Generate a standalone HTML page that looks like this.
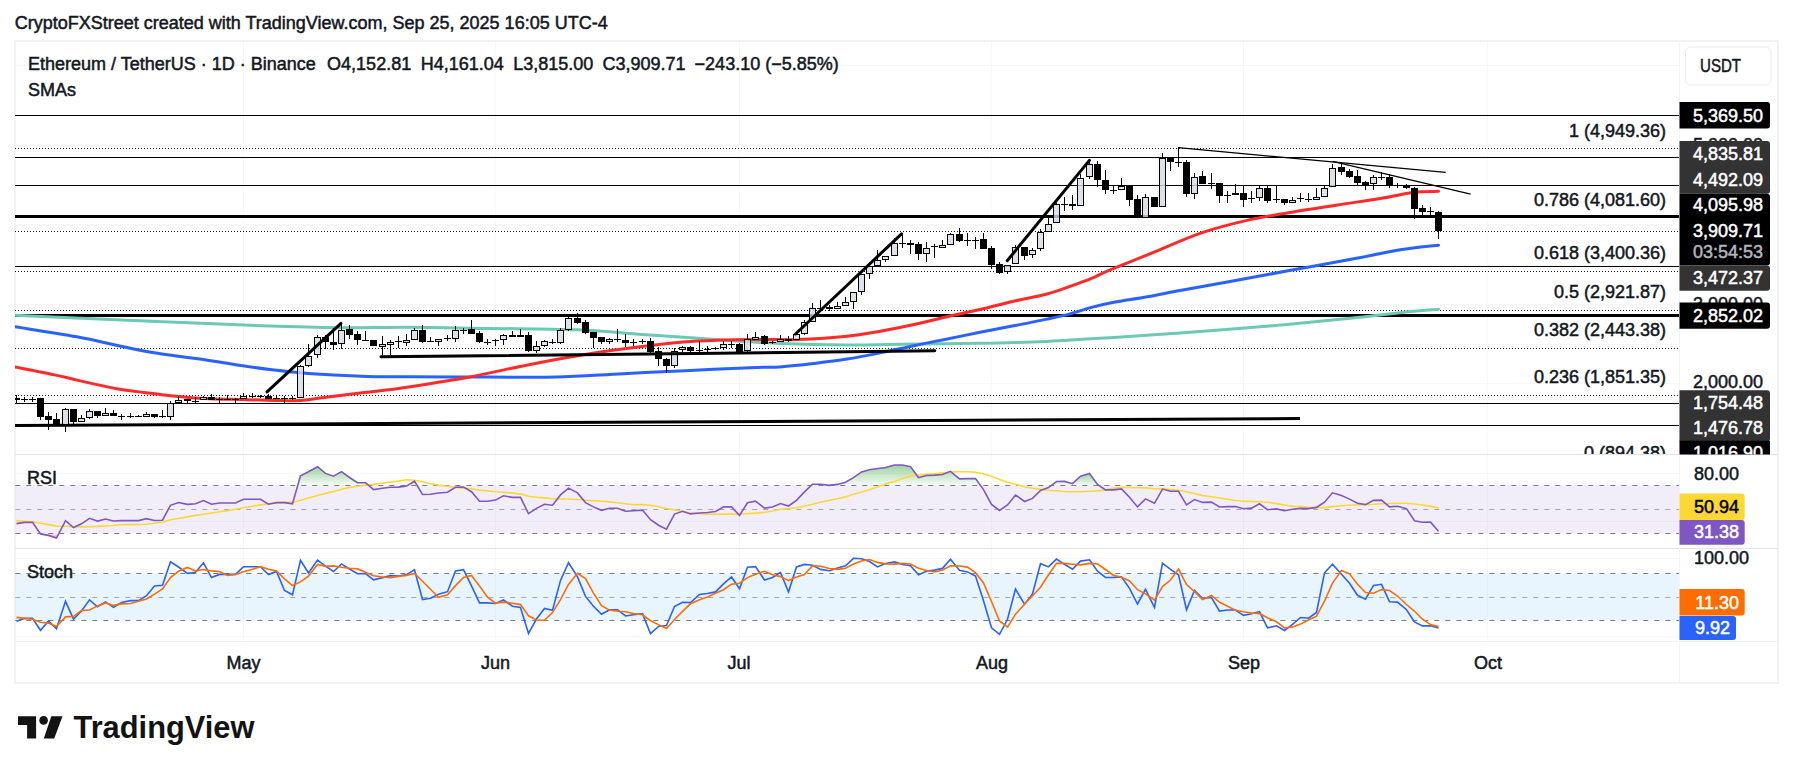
<!DOCTYPE html><html><head><meta charset="utf-8"><style>html,body{margin:0;padding:0;background:#fff;width:1793px;height:773px;overflow:hidden}svg{display:block}text{paint-order:stroke}</style></head><body>
<svg width="1793" height="773" viewBox="0 0 1793 773" font-family="'Liberation Sans', sans-serif" font-size="18">
<defs>
<clipPath id="cm"><rect x="15" y="42" width="1664" height="412"/></clipPath>
<clipPath id="cr"><rect x="15" y="455" width="1664" height="93"/></clipPath>
<clipPath id="cs"><rect x="15" y="549" width="1664" height="92"/></clipPath>
<linearGradient id="gg" x1="0" y1="0" x2="0" y2="1"><stop offset="0" stop-color="#4caf50" stop-opacity="0.55"/><stop offset="1" stop-color="#4caf50" stop-opacity="0.05"/></linearGradient>
<linearGradient id="gr" x1="0" y1="0" x2="0" y2="1"><stop offset="0" stop-color="#f23645" stop-opacity="0.05"/><stop offset="1" stop-color="#f23645" stop-opacity="0.55"/></linearGradient>
</defs>
<text x="14.7" y="29" fill="#131722" stroke="#131722" stroke-width="0.5">CryptoFXStreet created with TradingView.com, Sep 25, 2025 16:05 UTC-4</text>
<rect x="15" y="41" width="1763" height="642" fill="#fff" stroke="#f2f2f2" stroke-width="2"/>
<line x1="16" x2="1679" y1="65.5" y2="65.5" stroke="#f7f7f8"/>
<line x1="16" x2="1679" y1="145.5" y2="145.5" stroke="#f7f7f8"/>
<line x1="16" x2="1679" y1="224.5" y2="224.5" stroke="#f7f7f8"/>
<line x1="16" x2="1679" y1="304.5" y2="304.5" stroke="#f7f7f8"/>
<line x1="16" x2="1679" y1="383.5" y2="383.5" stroke="#f7f7f8"/>
<line x1="243.5" x2="243.5" y1="42" y2="641" stroke="#f7f7f8"/>
<line x1="495.5" x2="495.5" y1="42" y2="641" stroke="#f7f7f8"/>
<line x1="739.5" x2="739.5" y1="42" y2="641" stroke="#f7f7f8"/>
<line x1="991.5" x2="991.5" y1="42" y2="641" stroke="#f7f7f8"/>
<line x1="1243.5" x2="1243.5" y1="42" y2="641" stroke="#f7f7f8"/>
<line x1="1487.5" x2="1487.5" y1="42" y2="641" stroke="#f7f7f8"/>
<line x1="16" x2="1679" y1="473.5" y2="473.5" stroke="#f7f7f8"/>
<line x1="16" x2="1679" y1="521.5" y2="521.5" stroke="#f7f7f8"/>
<line x1="16" x2="1679" y1="558.5" y2="558.5" stroke="#f7f7f8"/>
<line x1="16" x2="1679" y1="636.5" y2="636.5" stroke="#f7f7f8"/>
<line x1="15" x2="1778" y1="454.5" y2="454.5" stroke="#e0e3eb"/>
<line x1="15" x2="1778" y1="548.5" y2="548.5" stroke="#e0e3eb"/>
<line x1="15" x2="1778" y1="641.5" y2="641.5" stroke="#f0f0f0"/>
<line x1="1679.5" x2="1679.5" y1="41" y2="682" stroke="#f4f4f4"/>
<g clip-path="url(#cm)">
<line x1="15" x2="1679" y1="148.5" y2="148.5" stroke="#131722" stroke-width="1" stroke-dasharray="1 2"/>
<line x1="15" x2="1679" y1="271.5" y2="271.5" stroke="#131722" stroke-width="1" stroke-dasharray="1 2"/>
<line x1="15" x2="1679" y1="310.5" y2="310.5" stroke="#131722" stroke-width="1" stroke-dasharray="1 2"/>
<line x1="15" x2="1679" y1="348.5" y2="348.5" stroke="#131722" stroke-width="1" stroke-dasharray="1 2"/>
<line x1="15" x2="1679" y1="395.5" y2="395.5" stroke="#131722" stroke-width="1" stroke-dasharray="1 2"/>
<line x1="15" x2="1679" y1="231.5" y2="231.5" stroke="#131722" stroke-width="1" stroke-dasharray="1 2"/>
<line x1="15" x2="1679" y1="115.5" y2="115.5" stroke="#000" stroke-width="1"/>
<line x1="15" x2="1679" y1="157.5" y2="157.5" stroke="#000" stroke-width="1"/>
<line x1="15" x2="1679" y1="185.5" y2="185.5" stroke="#000" stroke-width="1"/>
<line x1="15" x2="1679" y1="266.5" y2="266.5" stroke="#000" stroke-width="1"/>
<line x1="15" x2="1679" y1="403.5" y2="403.5" stroke="#000" stroke-width="1"/>
<line x1="15" x2="1679" y1="425.5" y2="425.5" stroke="#000" stroke-width="1"/>
<line x1="15" x2="1679" y1="216.5" y2="216.5" stroke="#000" stroke-width="3"/>
<line x1="15" x2="1679" y1="315.5" y2="315.5" stroke="#000" stroke-width="3"/>
<line x1="15" y1="425.5" x2="1300" y2="418.5" stroke="#000" stroke-width="3"/>
<path d="M15.0,315.2 C29.0,315.8 70.3,317.7 99.2,319.0 C128.1,320.3 158.8,321.6 188.5,322.8 C218.2,324.0 251.7,325.5 277.7,326.3 C303.7,327.1 322.6,327.6 344.6,327.7 C366.7,327.8 385.9,327.1 410.0,327.2 C434.1,327.3 461.1,328.0 489.2,328.4 C517.3,328.8 552.5,328.8 578.5,329.8 C604.5,330.9 623.1,333.1 645.4,334.7 C667.7,336.3 689.9,337.7 712.3,339.2 C734.7,340.7 757.6,342.5 780.0,343.5 C802.4,344.5 824.6,345.0 846.9,345.1 C869.2,345.2 891.7,344.3 913.9,344.0 C936.1,343.7 957.8,343.7 980.0,343.3 C1002.2,342.9 1024.6,342.4 1046.9,341.4 C1069.2,340.4 1091.7,338.9 1113.9,337.5 C1136.1,336.1 1161.3,334.4 1180.0,333.0 C1198.7,331.6 1207.3,330.9 1226.0,329.4 C1244.7,327.9 1270.0,326.0 1292.0,324.0 C1314.0,322.0 1339.6,319.3 1357.9,317.4 C1376.2,315.5 1388.5,313.9 1401.9,312.5 C1415.3,311.1 1432.4,309.8 1438.5,309.2" fill="none" stroke="#6cc9b3" stroke-width="3" stroke-linecap="round"/>
<path d="M15.0,326.8 C25.3,328.5 55.4,332.8 76.9,336.8 C98.4,340.8 121.6,346.9 143.9,350.9 C166.2,354.9 194.0,358.2 210.8,360.7 C227.6,363.2 231.5,364.3 244.6,366.1 C257.7,367.9 274.3,370.2 289.2,371.7 C304.1,373.2 320.9,374.3 333.9,375.1 C346.9,375.9 354.6,376.2 367.3,376.5 C380.0,376.8 389.7,376.6 410.0,376.7 C430.3,376.8 464.8,377.0 489.2,377.1 C513.6,377.2 533.9,377.7 556.2,377.1 C578.5,376.5 600.8,374.8 623.1,373.7 C645.4,372.6 667.7,371.4 690.0,370.4 C712.3,369.4 741.9,368.1 756.9,367.5 C771.9,366.9 770.6,367.6 780.0,366.9 C789.4,366.2 802.4,364.8 813.5,363.5 C824.6,362.2 835.8,360.9 846.9,359.1 C858.0,357.3 869.2,355.1 880.4,352.9 C891.6,350.7 902.8,348.0 913.9,345.7 C925.0,343.4 936.3,341.2 947.3,339.0 C958.3,336.8 969.0,334.4 980.0,332.2 C991.0,330.0 1002.4,328.0 1013.5,325.8 C1024.7,323.6 1037.6,321.1 1046.9,319.1 C1056.2,317.2 1061.8,316.1 1069.2,314.1 C1076.6,312.2 1084.0,309.4 1091.5,307.4 C1099.0,305.4 1104.6,304.1 1113.9,302.3 C1123.2,300.5 1136.3,298.8 1147.3,296.8 C1158.3,294.9 1166.9,293.0 1180.0,290.6 C1193.1,288.2 1207.3,285.6 1226.0,282.2 C1244.7,278.8 1270.0,274.1 1292.0,270.1 C1314.0,266.1 1339.6,261.4 1357.9,258.0 C1376.2,254.6 1388.5,251.7 1401.9,249.6 C1415.3,247.5 1432.4,245.9 1438.5,245.2" fill="none" stroke="#2962ff" stroke-width="3" stroke-linecap="round"/>
<path d="M15.0,367.0 C21.6,368.3 44.3,372.7 54.6,374.9 C64.9,377.1 69.5,378.4 76.9,380.1 C84.3,381.8 91.8,383.5 99.2,385.1 C106.6,386.7 114.0,388.4 121.5,389.6 C128.9,390.8 136.5,391.5 143.9,392.4 C151.3,393.3 158.8,394.4 166.2,395.2 C173.6,396.0 181.2,396.8 188.5,397.4 C195.8,398.0 200.7,398.3 210.0,398.7 C219.3,399.1 233.6,399.3 244.6,399.6 C255.6,399.9 266.7,400.2 276.0,400.4 C285.3,400.6 292.7,401.0 300.4,400.6 C308.1,400.2 312.7,399.0 322.0,397.8 C331.3,396.6 343.2,395.1 356.2,393.5 C369.2,391.9 381.6,390.9 400.0,388.2 C418.4,385.5 444.6,381.6 466.9,377.5 C489.2,373.4 511.6,367.9 533.9,363.7 C556.2,359.5 578.5,355.5 600.8,352.1 C623.1,348.8 651.0,345.5 667.7,343.6 C684.4,341.7 690.1,341.5 701.2,340.9 C712.4,340.3 721.5,340.0 734.6,339.8 C747.7,339.6 769.6,339.5 780.0,339.5 C790.4,339.5 785.6,340.2 796.7,339.6 C807.9,339.1 833.0,337.6 846.9,336.2 C860.8,334.8 869.2,333.1 880.4,331.2 C891.6,329.2 902.8,326.9 913.9,324.5 C925.0,322.1 936.3,319.2 947.3,316.7 C958.3,314.2 969.0,312.1 980.0,309.5 C991.0,306.9 1002.4,303.8 1013.5,301.2 C1024.7,298.6 1037.6,296.4 1046.9,294.0 C1056.2,291.6 1061.8,289.3 1069.2,286.7 C1076.6,284.1 1085.0,281.1 1091.5,278.4 C1098.0,275.7 1098.4,274.8 1108.3,270.6 C1118.2,266.4 1135.7,259.6 1151.0,253.4 C1166.3,247.2 1183.8,238.9 1200.0,233.3 C1216.2,227.8 1232.7,223.6 1248.0,220.1 C1263.3,216.6 1277.3,214.7 1292.0,212.2 C1306.7,209.7 1321.3,207.5 1336.0,205.2 C1350.7,202.9 1367.2,200.7 1380.0,198.6 C1392.8,196.5 1403.2,193.6 1412.9,192.4 C1422.7,191.2 1434.2,191.5 1438.5,191.3" fill="none" stroke="#ff2a2a" stroke-width="3" stroke-linecap="round"/>
<path d="M16.5,395V403M24.5,397V402M32.5,397V402M40.5,398V420M48.5,412V430M56.5,413V426M65.5,408V409M65.5,425V432M73.5,409V424M81.5,415V418M89.5,409V411M89.5,418V419M97.5,411V418M105.5,408V413M113.5,410V416M121.5,414V420M130.5,413V418M138.5,415V417M146.5,412V414M154.5,414V418M162.5,410V418M170.5,401V403M170.5,417V420M178.5,396V400M187.5,399V404M195.5,397V404M203.5,396V397M211.5,394V400M219.5,397V403M227.5,395V399M235.5,398V404M243.5,393V396M252.5,393V398M260.5,395V398M268.5,394V399M276.5,396V399M284.5,396V403M292.5,396V400M300.5,365V366M308.5,344V356M308.5,366V367M317.5,335V337M317.5,355V358M325.5,335V349M333.5,332V350M341.5,324V330M341.5,344V349M349.5,325V339M357.5,331V345M365.5,331V341M373.5,340V346M382.5,336V344M382.5,347V358M390.5,340V342M390.5,345V355M398.5,336V348M406.5,334V340M406.5,343V346M414.5,328V330M422.5,325V343M430.5,337V341M438.5,342V346M447.5,335V341M455.5,326V330M455.5,339V342M463.5,328V334M471.5,320V334M479.5,331V343M487.5,339V345M495.5,339V346M503.5,334V335M503.5,340V345M512.5,331V336M520.5,329V336M528.5,332V352M536.5,341V346M536.5,351V353M544.5,340V341M544.5,346V347M552.5,339V344M560.5,328V330M560.5,343V344M568.5,316V318M568.5,330V331M577.5,313V324M585.5,320V334M593.5,332V348M601.5,337V344M609.5,338V339M609.5,342V344M617.5,329V342M625.5,334V347M633.5,339V346M642.5,339V344M650.5,338V353M658.5,347V366M666.5,358V373M674.5,348V351M674.5,366V368M682.5,346V347M682.5,350V352M690.5,346V352M699.5,341V352M707.5,346V352M715.5,347V350M723.5,341V344M723.5,348V350M731.5,341V348M739.5,343V352M747.5,334V339M747.5,351V352M755.5,332V337M764.5,335V345M772.5,341V344M780.5,335V339M788.5,336V342M796.5,333V334M804.5,320V322M804.5,334V335M812.5,303V308M820.5,300V311M829.5,305V311M837.5,302V306M845.5,297V302M853.5,302V309M861.5,292V295M869.5,262V266M869.5,274V279M877.5,250V260M885.5,260V262M894.5,238V243M902.5,235V248M910.5,240V254M918.5,242V260M926.5,242V248M926.5,254V262M934.5,244V258M942.5,240V245M950.5,233V234M959.5,228V242M967.5,233V246M975.5,237V249M983.5,233V249M991.5,246V269M999.5,262V274M1007.5,272V274M1015.5,245V247M1024.5,247V260M1032.5,248V250M1032.5,255V258M1040.5,229V232M1040.5,249V251M1048.5,217V224M1056.5,203V204M1064.5,197V211M1072.5,195V210M1080.5,174V178M1089.5,162V164M1089.5,177V179M1097.5,161V187M1105.5,170V194M1113.5,186V194M1121.5,178V186M1129.5,185V206M1137.5,195V218M1145.5,194V197M1154.5,197V207M1162.5,153V158M1170.5,158V171M1178.5,147V167M1186.5,160V197M1194.5,173V177M1194.5,194V199M1202.5,171V184M1211.5,173V189M1219.5,183V203M1227.5,191V203M1235.5,184V195M1243.5,186V207M1251.5,191V203M1259.5,186V188M1259.5,198V201M1267.5,186V203M1276.5,186V203M1284.5,199V205M1292.5,197V200M1300.5,193V202M1308.5,193V202M1316.5,188V197M1324.5,186V188M1332.5,164V168M1341.5,162V175M1349.5,169V178M1357.5,170V186M1365.5,181V190M1373.5,175V177M1373.5,184V190M1381.5,172V180M1389.5,174V188M1397.5,183V188M1406.5,184V189M1414.5,187V219M1422.5,205V215M1430.5,207V215M1438.5,211V239" stroke="#000" stroke-width="1" fill="none"/>
<path d="M21.0,399.5H28.0M29.0,399.5H36.0M118.0,416.5H125.0M127.0,416.5H134.0M135.0,416.5H142.0M159.0,416.5H166.0M192.0,401.5H199.0M216.0,399.5H223.0M224.0,399.5H231.0M232.0,399.5H239.0M249.0,396.5H256.0M257.0,396.5H264.0M273.0,398.5H280.0M281.0,398.5H288.0M289.0,398.5H296.0M362.0,340.5H369.0M395.0,341.5H402.0M427.0,341.5H434.0M444.0,338.5H451.0M460.0,330.5H467.0M484.0,342.5H491.0M492.0,340.5H499.0M549.0,342.5H556.0M614.0,339.5H621.0M630.0,342.5H637.0M639.0,341.5H646.0M696.0,350.5H703.0M704.0,349.5H711.0M712.0,348.5H719.0M728.0,344.5H735.0M769.0,342.5H776.0M817.0,308.5H824.0M899.0,243.5H906.0M931.0,246.5H938.0M964.0,240.5H971.0M972.0,240.5H979.0M1061.0,204.5H1068.0M1110.0,190.5H1117.0M1175.0,162.5H1182.0M1208.0,183.5H1215.0M1224.0,195.5H1231.0M1248.0,198.5H1255.0M1273.0,199.5H1280.0M1297.0,198.5H1304.0M1305.0,199.5H1312.0M1378.0,177.5H1385.0M1394.0,185.5H1401.0M1427.0,211.5H1434.0" stroke="#000" stroke-width="1" fill="none"/>
<path d="M13.0,398h7v2h-7zM37.0,398h7v19h-7zM45.0,416h7v4h-7zM53.0,419h7v6h-7zM70.0,409h7v13h-7zM94.0,411h7v5h-7zM110.0,413h7v3h-7zM151.0,414h7v3h-7zM184.0,399h7v2h-7zM208.0,397h7v3h-7zM265.0,396h7v3h-7zM322.0,337h7v5h-7zM330.0,342h7v3h-7zM346.0,329h7v6h-7zM354.0,334h7v6h-7zM370.0,340h7v6h-7zM419.0,330h7v12h-7zM468.0,329h7v5h-7zM476.0,333h7v9h-7zM509.0,335h7v2h-7zM517.0,335h7v2h-7zM525.0,335h7v16h-7zM574.0,318h7v5h-7zM582.0,322h7v11h-7zM590.0,332h7v6h-7zM598.0,337h7v5h-7zM622.0,340h7v3h-7zM647.0,341h7v11h-7zM655.0,351h7v8h-7zM663.0,359h7v7h-7zM687.0,347h7v4h-7zM736.0,344h7v8h-7zM761.0,336h7v8h-7zM785.0,339h7v2h-7zM826.0,307h7v2h-7zM907.0,243h7v2h-7zM915.0,244h7v10h-7zM956.0,234h7v7h-7zM980.0,239h7v10h-7zM988.0,248h7v17h-7zM996.0,264h7v9h-7zM1021.0,247h7v9h-7zM1069.0,204h7v2h-7zM1094.0,164h7v16h-7zM1102.0,180h7v10h-7zM1126.0,186h7v14h-7zM1134.0,199h7v19h-7zM1151.0,197h7v10h-7zM1167.0,158h7v4h-7zM1183.0,162h7v32h-7zM1199.0,176h7v8h-7zM1216.0,183h7v13h-7zM1232.0,193h7v2h-7zM1240.0,193h7v7h-7zM1264.0,188h7v13h-7zM1281.0,199h7v4h-7zM1338.0,167h7v5h-7zM1346.0,171h7v6h-7zM1354.0,176h7v7h-7zM1362.0,182h7v3h-7zM1386.0,177h7v9h-7zM1403.0,185h7v3h-7zM1411.0,188h7v21h-7zM1419.0,208h7v4h-7zM1435.0,212h7v19h-7z" fill="#000"/>
<rect x="62.5" y="409.5" width="6" height="15" fill="rgba(214,217,226,0.8)" stroke="#000" stroke-width="1"/>
<rect x="78.5" y="418.5" width="6" height="3" fill="rgba(214,217,226,0.8)" stroke="#000" stroke-width="1"/>
<rect x="86.5" y="411.5" width="6" height="6" fill="rgba(214,217,226,0.8)" stroke="#000" stroke-width="1"/>
<rect x="102.5" y="413.5" width="6" height="2" fill="rgba(214,217,226,0.8)" stroke="#000" stroke-width="1"/>
<rect x="143.5" y="414.5" width="6" height="2" fill="rgba(214,217,226,0.8)" stroke="#000" stroke-width="1"/>
<rect x="167.5" y="403.5" width="6" height="13" fill="rgba(214,217,226,0.8)" stroke="#000" stroke-width="1"/>
<rect x="175.5" y="400.5" width="6" height="2" fill="rgba(214,217,226,0.8)" stroke="#000" stroke-width="1"/>
<rect x="200.5" y="397.5" width="6" height="2" fill="rgba(214,217,226,0.8)" stroke="#000" stroke-width="1"/>
<rect x="240.5" y="396.5" width="6" height="2" fill="rgba(214,217,226,0.8)" stroke="#000" stroke-width="1"/>
<rect x="297.5" y="366.5" width="6" height="31" fill="rgba(214,217,226,0.8)" stroke="#000" stroke-width="1"/>
<rect x="305.5" y="356.5" width="6" height="9" fill="rgba(214,217,226,0.8)" stroke="#000" stroke-width="1"/>
<rect x="314.5" y="337.5" width="6" height="17" fill="rgba(214,217,226,0.8)" stroke="#000" stroke-width="1"/>
<rect x="338.5" y="330.5" width="6" height="13" fill="rgba(214,217,226,0.8)" stroke="#000" stroke-width="1"/>
<rect x="379.5" y="344.5" width="6" height="2" fill="rgba(214,217,226,0.8)" stroke="#000" stroke-width="1"/>
<rect x="387.5" y="342.5" width="6" height="2" fill="rgba(214,217,226,0.8)" stroke="#000" stroke-width="1"/>
<rect x="403.5" y="340.5" width="6" height="2" fill="rgba(214,217,226,0.8)" stroke="#000" stroke-width="1"/>
<rect x="411.5" y="330.5" width="6" height="9" fill="rgba(214,217,226,0.8)" stroke="#000" stroke-width="1"/>
<rect x="435.5" y="339.5" width="6" height="2" fill="rgba(214,217,226,0.8)" stroke="#000" stroke-width="1"/>
<rect x="452.5" y="330.5" width="6" height="8" fill="rgba(214,217,226,0.8)" stroke="#000" stroke-width="1"/>
<rect x="500.5" y="335.5" width="6" height="4" fill="rgba(214,217,226,0.8)" stroke="#000" stroke-width="1"/>
<rect x="533.5" y="346.5" width="6" height="4" fill="rgba(214,217,226,0.8)" stroke="#000" stroke-width="1"/>
<rect x="541.5" y="341.5" width="6" height="4" fill="rgba(214,217,226,0.8)" stroke="#000" stroke-width="1"/>
<rect x="557.5" y="330.5" width="6" height="12" fill="rgba(214,217,226,0.8)" stroke="#000" stroke-width="1"/>
<rect x="565.5" y="318.5" width="6" height="11" fill="rgba(214,217,226,0.8)" stroke="#000" stroke-width="1"/>
<rect x="606.5" y="339.5" width="6" height="2" fill="rgba(214,217,226,0.8)" stroke="#000" stroke-width="1"/>
<rect x="671.5" y="351.5" width="6" height="14" fill="rgba(214,217,226,0.8)" stroke="#000" stroke-width="1"/>
<rect x="679.5" y="347.5" width="6" height="2" fill="rgba(214,217,226,0.8)" stroke="#000" stroke-width="1"/>
<rect x="720.5" y="344.5" width="6" height="3" fill="rgba(214,217,226,0.8)" stroke="#000" stroke-width="1"/>
<rect x="744.5" y="339.5" width="6" height="11" fill="rgba(214,217,226,0.8)" stroke="#000" stroke-width="1"/>
<rect x="752.5" y="337.5" width="6" height="2" fill="rgba(214,217,226,0.8)" stroke="#000" stroke-width="1"/>
<rect x="777.5" y="339.5" width="6" height="2" fill="rgba(214,217,226,0.8)" stroke="#000" stroke-width="1"/>
<rect x="793.5" y="334.5" width="6" height="5" fill="rgba(214,217,226,0.8)" stroke="#000" stroke-width="1"/>
<rect x="801.5" y="322.5" width="6" height="11" fill="rgba(214,217,226,0.8)" stroke="#000" stroke-width="1"/>
<rect x="809.5" y="308.5" width="6" height="13" fill="rgba(214,217,226,0.8)" stroke="#000" stroke-width="1"/>
<rect x="834.5" y="306.5" width="6" height="2" fill="rgba(214,217,226,0.8)" stroke="#000" stroke-width="1"/>
<rect x="842.5" y="302.5" width="6" height="3" fill="rgba(214,217,226,0.8)" stroke="#000" stroke-width="1"/>
<rect x="850.5" y="292.5" width="6" height="9" fill="rgba(214,217,226,0.8)" stroke="#000" stroke-width="1"/>
<rect x="858.5" y="274.5" width="6" height="17" fill="rgba(214,217,226,0.8)" stroke="#000" stroke-width="1"/>
<rect x="866.5" y="266.5" width="6" height="7" fill="rgba(214,217,226,0.8)" stroke="#000" stroke-width="1"/>
<rect x="874.5" y="260.5" width="6" height="5" fill="rgba(214,217,226,0.8)" stroke="#000" stroke-width="1"/>
<rect x="882.5" y="256.5" width="6" height="3" fill="rgba(214,217,226,0.8)" stroke="#000" stroke-width="1"/>
<rect x="891.5" y="243.5" width="6" height="12" fill="rgba(214,217,226,0.8)" stroke="#000" stroke-width="1"/>
<rect x="923.5" y="248.5" width="6" height="5" fill="rgba(214,217,226,0.8)" stroke="#000" stroke-width="1"/>
<rect x="939.5" y="245.5" width="6" height="2" fill="rgba(214,217,226,0.8)" stroke="#000" stroke-width="1"/>
<rect x="947.5" y="234.5" width="6" height="10" fill="rgba(214,217,226,0.8)" stroke="#000" stroke-width="1"/>
<rect x="1004.5" y="265.5" width="6" height="6" fill="rgba(214,217,226,0.8)" stroke="#000" stroke-width="1"/>
<rect x="1012.5" y="247.5" width="6" height="16" fill="rgba(214,217,226,0.8)" stroke="#000" stroke-width="1"/>
<rect x="1029.5" y="250.5" width="6" height="4" fill="rgba(214,217,226,0.8)" stroke="#000" stroke-width="1"/>
<rect x="1037.5" y="232.5" width="6" height="16" fill="rgba(214,217,226,0.8)" stroke="#000" stroke-width="1"/>
<rect x="1045.5" y="224.5" width="6" height="7" fill="rgba(214,217,226,0.8)" stroke="#000" stroke-width="1"/>
<rect x="1053.5" y="204.5" width="6" height="18" fill="rgba(214,217,226,0.8)" stroke="#000" stroke-width="1"/>
<rect x="1077.5" y="178.5" width="6" height="27" fill="rgba(214,217,226,0.8)" stroke="#000" stroke-width="1"/>
<rect x="1086.5" y="164.5" width="6" height="12" fill="rgba(214,217,226,0.8)" stroke="#000" stroke-width="1"/>
<rect x="1118.5" y="186.5" width="6" height="3" fill="rgba(214,217,226,0.8)" stroke="#000" stroke-width="1"/>
<rect x="1142.5" y="197.5" width="6" height="20" fill="rgba(214,217,226,0.8)" stroke="#000" stroke-width="1"/>
<rect x="1159.5" y="158.5" width="6" height="48" fill="rgba(214,217,226,0.8)" stroke="#000" stroke-width="1"/>
<rect x="1191.5" y="177.5" width="6" height="16" fill="rgba(214,217,226,0.8)" stroke="#000" stroke-width="1"/>
<rect x="1256.5" y="188.5" width="6" height="9" fill="rgba(214,217,226,0.8)" stroke="#000" stroke-width="1"/>
<rect x="1289.5" y="200.5" width="6" height="2" fill="rgba(214,217,226,0.8)" stroke="#000" stroke-width="1"/>
<rect x="1313.5" y="197.5" width="6" height="2" fill="rgba(214,217,226,0.8)" stroke="#000" stroke-width="1"/>
<rect x="1321.5" y="188.5" width="6" height="8" fill="rgba(214,217,226,0.8)" stroke="#000" stroke-width="1"/>
<rect x="1329.5" y="168.5" width="6" height="18" fill="rgba(214,217,226,0.8)" stroke="#000" stroke-width="1"/>
<rect x="1370.5" y="177.5" width="6" height="6" fill="rgba(214,217,226,0.8)" stroke="#000" stroke-width="1"/>
<line x1="267" y1="391.9" x2="341" y2="323.4" stroke="#000" stroke-width="3" stroke-linecap="round"/>
<line x1="381" y1="356.8" x2="934.7" y2="350.8" stroke="#000" stroke-width="3" stroke-linecap="round"/>
<line x1="795.5" y1="334" x2="901.6" y2="233.8" stroke="#000" stroke-width="3" stroke-linecap="round"/>
<line x1="1007.2" y1="260.7" x2="1089.4" y2="160.4" stroke="#000" stroke-width="3" stroke-linecap="round"/>
<line x1="1178.3" y1="147.6" x2="1445.7" y2="172.4" stroke="#000" stroke-width="1.2"/>
<line x1="1332.6" y1="161.3" x2="1470.6" y2="194.1" stroke="#000" stroke-width="1.2"/>
<text x="1666" y="136.6" text-anchor="end" fill="#131722" stroke="#131722" stroke-width="0.5">1 (4,949.36)</text>
<text x="1666" y="205.5" text-anchor="end" fill="#131722" stroke="#131722" stroke-width="0.5">0.786 (4,081.60)</text>
<text x="1666" y="259.4" text-anchor="end" fill="#131722" stroke="#131722" stroke-width="0.5">0.618 (3,400.36)</text>
<text x="1666" y="297.9" text-anchor="end" fill="#131722" stroke="#131722" stroke-width="0.5">0.5 (2,921.87)</text>
<text x="1666" y="335.9" text-anchor="end" fill="#131722" stroke="#131722" stroke-width="0.5">0.382 (2,443.38)</text>
<text x="1666" y="383.0" text-anchor="end" fill="#131722" stroke="#131722" stroke-width="0.5">0.236 (1,851.35)</text>
<text x="1666" y="459.1" text-anchor="end" fill="#131722" stroke="#131722" stroke-width="0.5">0 (894.38)</text>
</g>
<text x="28" y="70" fill="#131722" stroke="#131722" stroke-width="0.5">Ethereum / TetherUS · 1D · Binance</text>
<text x="327.1" y="70" fill="#131722" stroke="#131722" stroke-width="0.5">O4,152.81</text>
<text x="420.8" y="70" fill="#131722" stroke="#131722" stroke-width="0.5">H4,161.04</text>
<text x="513.3" y="70" fill="#131722" stroke="#131722" stroke-width="0.5">L3,815.00</text>
<text x="602.5" y="70" fill="#131722" stroke="#131722" stroke-width="0.5">C3,909.71</text>
<text x="694.6" y="70" fill="#131722" stroke="#131722" stroke-width="0.5">−243.10 (−5.85%)</text>
<text x="28" y="95.5" fill="#131722" stroke="#131722" stroke-width="0.5">SMAs</text>
<rect x="1685.5" y="47" width="85.5" height="38" rx="5" fill="#fff" stroke="#ebebeb"/>
<text x="1700" y="71.8" fill="#131722" stroke="#131722" stroke-width="0.5" textLength="41" lengthAdjust="spacingAndGlyphs">USDT</text>
<g>
<text x="1763" y="151.0" text-anchor="end" fill="#131722" stroke="#131722" stroke-width="0.5">5,000.00</text>
<text x="1763" y="310.0" text-anchor="end" fill="#131722" stroke="#131722" stroke-width="0.5">3,000.00</text>
<text x="1763" y="388.1" text-anchor="end" fill="#131722" stroke="#131722" stroke-width="0.5">2,000.00</text>
<path d="M1679.5,102H1767Q1770,102 1770,105V125.4Q1770,128.4 1767,128.4H1679.5Z" fill="#000"/>
<text x="1763" y="121.6" text-anchor="end" fill="#fff" stroke="#fff" stroke-width="0.5">5,369.50</text>
<path d="M1679.5,141.1H1767Q1770,141.1 1770,144.1V190.7Q1770,193.7 1767,193.7H1679.5Z" fill="#333333"/>
<text x="1763" y="159.6" text-anchor="end" fill="#fff" stroke="#fff" stroke-width="0.5">4,835.81</text>
<text x="1763" y="186.0" text-anchor="end" fill="#fff" stroke="#fff" stroke-width="0.5">4,492.09</text>
<path d="M1679.5,193.7H1767Q1770,193.7 1770,196.7V262.6Q1770,265.6 1767,265.6H1679.5Z" fill="#000"/>
<text x="1763" y="211.4" text-anchor="end" fill="#fff" stroke="#fff" stroke-width="0.5">4,095.98</text>
<text x="1763" y="237.0" text-anchor="end" fill="#fff" stroke="#fff" stroke-width="0.5">3,909.71</text>
<text x="1763" y="258.4" text-anchor="end" fill="#b2b5be" stroke="#b2b5be" stroke-width="0.5">03:54:53</text>
<path d="M1679.5,265.6H1767Q1770,265.6 1770,268.6V287.8Q1770,290.8 1767,290.8H1679.5Z" fill="#333333"/>
<text x="1763" y="283.6" text-anchor="end" fill="#fff" stroke="#fff" stroke-width="0.5">3,472.37</text>
<path d="M1679.5,302.5H1767Q1770,302.5 1770,305.5V325.7Q1770,328.7 1767,328.7H1679.5Z" fill="#000"/>
<text x="1763" y="321.5" text-anchor="end" fill="#fff" stroke="#fff" stroke-width="0.5">2,852.02</text>
<path d="M1679.5,390.3H1767Q1770,390.3 1770,393.3V438.5Q1770,441.5 1767,441.5H1679.5Z" fill="#333333"/>
<text x="1763" y="409.1" text-anchor="end" fill="#fff" stroke="#fff" stroke-width="0.5">1,754.48</text>
<text x="1763" y="433.9" text-anchor="end" fill="#fff" stroke="#fff" stroke-width="0.5">1,476.78</text>
<svg x="1679" y="440.5" width="100" height="14" overflow="hidden"><rect x="0.5" y="0" width="90.5" height="20" fill="#000"/><text x="84" y="18.4" text-anchor="end" fill="#fff" stroke="#fff" stroke-width="0.5">1,016.90</text></svg>
</g>
<rect x="15.5" y="485.4" width="1663.5" height="47.8" fill="#7e57c2" fill-opacity="0.1"/>
<rect x="15.5" y="573.7" width="1663.5" height="46.5" fill="#2196f3" fill-opacity="0.1"/>
<line x1="15.3" x2="1679" y1="485.5" y2="485.5" stroke="#787b86" stroke-dasharray="5 6"/>
<line x1="15.3" x2="1679" y1="509.5" y2="509.5" stroke="#a3a6af" stroke-dasharray="5 6"/>
<line x1="15.3" x2="1679" y1="533.5" y2="533.5" stroke="#787b86" stroke-dasharray="5 6"/>
<line x1="15.3" x2="1679" y1="573.5" y2="573.5" stroke="#787b86" stroke-dasharray="5 6"/>
<line x1="15.3" x2="1679" y1="597.5" y2="597.5" stroke="#a3a6af" stroke-dasharray="5 6"/>
<line x1="15.3" x2="1679" y1="620.5" y2="620.5" stroke="#787b86" stroke-dasharray="5 6"/>
<g clip-path="url(#cr)">
<path d="M297.8,485.4 L300.5,475.8 L308.5,471.7 L317.5,466.7 L325.5,473.4 L333.5,476.2 L341.5,471.6 L349.5,477.5 L357.5,482.7 L365.5,482.7 L368.7,485.4Z" fill="url(#gg)"/>
<path d="M407.7,485.4 L414.5,481.2 L417.0,485.4Z" fill="url(#gg)"/>
<path d="M811.3,485.4 L812.5,484.2 L820.5,484.2 L829.4,485.4Z" fill="url(#gg)"/>
<path d="M829.6,485.4 L837.5,484.4 L845.5,482.2 L853.5,477.7 L861.5,471.9 L869.5,469.7 L877.5,468.5 L885.5,467.5 L894.5,465.0 L902.5,465.0 L910.5,466.6 L918.5,477.5 L926.5,475.5 L934.5,475.1 L942.5,474.5 L950.5,471.3 L959.5,478.9 L967.5,478.6 L975.5,478.6 L980.5,485.4Z" fill="url(#gg)"/>
<path d="M1051.3,485.4 L1056.5,481.5 L1064.5,481.4 L1072.5,483.7 L1080.5,476.2 L1089.5,473.5 L1097.5,484.4 L1099.0,485.4Z" fill="url(#gg)"/>
<path d="M40.0,533.2 L40.5,533.9 L48.5,535.4 L56.5,538.0 L59.0,533.2Z" fill="url(#gr)"/>
<polyline points="16.5,520.6 24.5,521.3 32.5,521.9 40.5,523.3 48.5,524.6 56.5,526.1 65.5,526.2 73.5,526.7 81.5,526.9 89.5,526.6 97.5,526.4 105.5,525.9 113.5,525.5 121.5,524.8 130.5,524.6 138.5,524.5 146.5,524.2 154.5,523.2 162.5,522.2 170.5,519.8 178.5,518.5 187.5,516.9 195.5,515.4 203.5,514.2 211.5,513.0 219.5,511.8 227.5,510.6 235.5,509.3 243.5,507.8 252.5,506.3 260.5,504.9 268.5,503.7 276.5,502.5 284.5,502.3 292.5,502.4 300.5,500.3 308.5,498.0 317.5,495.6 325.5,493.4 333.5,491.5 341.5,489.3 349.5,487.4 357.5,486.3 365.5,485.1 373.5,484.4 382.5,483.2 390.5,482.1 398.5,481.0 406.5,479.8 414.5,480.2 422.5,481.8 430.5,483.7 438.5,485.1 447.5,486.3 455.5,487.4 463.5,488.1 471.5,488.7 479.5,490.1 487.5,490.9 495.5,491.7 503.5,492.3 512.5,493.1 520.5,493.9 528.5,496.2 536.5,497.2 544.5,497.9 552.5,498.8 560.5,499.0 568.5,499.0 577.5,499.5 585.5,500.2 593.5,500.6 601.5,501.3 609.5,501.9 617.5,502.8 625.5,503.8 633.5,504.7 642.5,504.5 650.5,505.3 658.5,506.8 666.5,508.5 674.5,509.8 682.5,511.5 690.5,513.0 699.5,513.7 707.5,514.1 715.5,514.2 723.5,514.1 731.5,514.0 739.5,514.3 747.5,513.7 755.5,513.1 764.5,512.3 772.5,511.0 780.5,509.2 788.5,508.6 796.5,507.8 804.5,506.2 812.5,504.2 820.5,502.2 829.5,500.3 837.5,498.7 845.5,496.9 853.5,494.2 861.5,492.0 869.5,489.8 877.5,486.9 885.5,484.1 894.5,481.4 902.5,478.4 910.5,476.0 918.5,475.0 926.5,474.4 934.5,473.7 942.5,472.9 950.5,472.0 959.5,471.8 967.5,471.8 975.5,472.3 983.5,473.7 991.5,476.3 999.5,479.4 1007.5,482.2 1015.5,484.3 1024.5,486.8 1032.5,488.3 1040.5,489.4 1048.5,490.3 1056.5,490.8 1064.5,491.5 1072.5,491.8 1080.5,491.7 1089.5,491.3 1097.5,490.9 1105.5,489.9 1113.5,488.4 1121.5,487.3 1129.5,487.5 1137.5,487.8 1145.5,487.9 1154.5,488.8 1162.5,488.9 1170.5,489.6 1178.5,490.3 1186.5,491.8 1194.5,493.5 1202.5,495.6 1211.5,496.8 1219.5,498.0 1227.5,499.2 1235.5,500.5 1243.5,501.3 1251.5,501.4 1259.5,501.8 1267.5,502.2 1276.5,503.6 1284.5,505.0 1292.5,506.3 1300.5,506.6 1308.5,507.2 1316.5,507.6 1324.5,507.6 1332.5,506.6 1341.5,505.8 1349.5,505.2 1357.5,504.8 1365.5,504.6 1373.5,504.3 1381.5,503.7 1389.5,503.5 1397.5,503.2 1406.5,503.2 1414.5,504.0 1422.5,505.0 1430.5,506.1 1438.5,508.1" fill="none" stroke="#fdd835" stroke-width="1.6"/>
<polyline points="16.5,523.6 24.5,522.4 32.5,522.4 40.5,533.9 48.5,535.4 56.5,538.0 65.5,520.7 73.5,527.5 81.5,523.8 89.5,518.3 97.5,521.1 105.5,519.0 113.5,521.0 121.5,520.6 130.5,520.6 138.5,520.6 146.5,518.6 154.5,520.5 162.5,520.2 170.5,505.3 178.5,502.5 187.5,504.4 195.5,503.8 203.5,500.6 211.5,504.2 219.5,503.0 227.5,503.0 235.5,503.0 243.5,499.3 252.5,499.3 260.5,499.3 268.5,504.2 276.5,502.6 284.5,502.6 292.5,503.8 300.5,475.8 308.5,471.7 317.5,466.7 325.5,473.4 333.5,476.2 341.5,471.6 349.5,477.5 357.5,482.7 365.5,482.7 373.5,489.6 382.5,488.3 390.5,487.3 398.5,487.1 406.5,486.1 414.5,481.2 422.5,494.5 430.5,494.2 438.5,493.0 447.5,492.2 455.5,487.3 463.5,487.0 471.5,491.7 479.5,501.3 487.5,501.3 495.5,500.1 503.5,495.8 512.5,497.4 520.5,497.4 528.5,513.6 536.5,508.4 544.5,504.3 552.5,505.2 560.5,494.9 568.5,488.1 577.5,492.9 585.5,502.6 593.5,506.9 601.5,510.3 609.5,508.3 617.5,508.3 625.5,511.3 633.5,510.7 642.5,510.1 650.5,519.7 658.5,525.2 666.5,529.1 674.5,514.1 682.5,511.3 690.5,513.9 699.5,513.0 707.5,512.5 715.5,511.5 723.5,506.9 731.5,506.9 739.5,515.4 747.5,502.8 755.5,501.2 764.5,508.1 772.5,507.0 780.5,503.6 788.5,506.0 796.5,500.4 804.5,491.9 812.5,484.2 820.5,484.2 829.5,485.4 837.5,484.4 845.5,482.2 853.5,477.7 861.5,471.9 869.5,469.7 877.5,468.5 885.5,467.5 894.5,465.0 902.5,465.0 910.5,466.6 918.5,477.5 926.5,475.5 934.5,475.1 942.5,474.5 950.5,471.3 959.5,478.9 967.5,478.6 975.5,478.6 983.5,489.6 991.5,504.4 999.5,510.5 1007.5,504.9 1015.5,495.0 1024.5,501.5 1032.5,498.4 1040.5,490.5 1048.5,487.6 1056.5,481.5 1064.5,481.4 1072.5,483.7 1080.5,476.2 1089.5,473.5 1097.5,484.4 1105.5,489.9 1113.5,489.9 1121.5,488.9 1129.5,497.2 1137.5,506.9 1145.5,498.9 1154.5,503.3 1162.5,489.1 1170.5,491.3 1178.5,491.3 1186.5,504.8 1194.5,499.6 1202.5,502.4 1211.5,502.1 1219.5,507.0 1227.5,506.6 1235.5,506.6 1243.5,508.8 1251.5,508.1 1259.5,503.8 1267.5,509.7 1276.5,508.9 1284.5,510.7 1292.5,509.2 1300.5,508.4 1308.5,508.6 1316.5,507.4 1324.5,502.2 1332.5,492.8 1341.5,495.6 1349.5,499.1 1357.5,503.2 1365.5,504.6 1373.5,500.4 1381.5,500.1 1389.5,506.9 1397.5,506.3 1406.5,508.6 1414.5,520.8 1422.5,522.2 1430.5,522.1 1438.5,531.2" fill="none" stroke="#7e57c2" stroke-width="1.6"/>
</g>
<g clip-path="url(#cs)">
<polyline points="16.5,621.2 24.5,618.4 32.5,618.2 40.5,630.3 48.5,620.9 56.5,628.7 65.5,601.3 73.5,619.2 81.5,610.9 89.5,599.9 97.5,606.8 105.5,601.9 113.5,607.3 121.5,602.5 130.5,600.6 138.5,600.6 146.5,595.7 154.5,585.9 162.5,585.2 170.5,561.8 178.5,567.0 187.5,573.4 195.5,572.2 203.5,562.8 211.5,577.6 219.5,574.4 227.5,574.4 235.5,574.4 243.5,566.7 252.5,566.7 260.5,566.7 268.5,574.6 276.5,571.4 284.5,590.5 292.5,594.8 300.5,560.4 308.5,573.0 317.5,560.1 325.5,566.2 333.5,571.5 341.5,563.9 349.5,569.0 357.5,573.8 365.5,573.6 373.5,579.9 382.5,577.6 390.5,575.6 398.5,576.0 406.5,574.6 414.5,569.7 422.5,599.5 430.5,598.3 438.5,594.2 447.5,591.7 455.5,570.9 463.5,569.7 471.5,585.8 479.5,602.9 487.5,602.9 495.5,603.5 503.5,600.0 512.5,606.2 520.5,607.5 528.5,633.5 536.5,619.0 544.5,608.4 552.5,610.3 560.5,580.4 568.5,562.7 577.5,576.9 585.5,596.4 593.5,606.2 601.5,614.3 609.5,609.7 617.5,609.7 625.5,616.0 633.5,614.8 642.5,613.7 650.5,633.6 658.5,626.5 666.5,625.5 674.5,606.5 682.5,602.2 690.5,602.6 699.5,594.5 707.5,593.5 715.5,591.9 723.5,583.9 731.5,577.0 739.5,588.7 747.5,567.2 755.5,566.6 764.5,580.0 772.5,577.5 780.5,572.4 788.5,592.0 796.5,567.0 804.5,564.4 812.5,565.3 820.5,569.4 829.5,570.8 837.5,567.9 845.5,565.8 853.5,558.3 861.5,558.7 869.5,561.5 877.5,566.9 885.5,563.4 894.5,561.9 902.5,564.5 910.5,565.7 918.5,574.7 926.5,571.3 934.5,570.1 942.5,568.4 950.5,559.3 959.5,570.2 967.5,571.9 975.5,576.0 983.5,600.8 991.5,627.8 999.5,634.3 1007.5,619.3 1015.5,589.1 1024.5,604.2 1032.5,593.9 1040.5,563.7 1048.5,566.9 1056.5,559.1 1064.5,564.3 1072.5,569.2 1080.5,561.1 1089.5,559.8 1097.5,571.2 1105.5,577.5 1113.5,577.5 1121.5,576.9 1129.5,588.3 1137.5,604.0 1145.5,589.3 1154.5,607.5 1162.5,563.2 1170.5,569.4 1178.5,574.8 1186.5,609.8 1194.5,590.4 1202.5,598.3 1211.5,597.5 1219.5,611.1 1227.5,610.0 1235.5,610.0 1243.5,615.3 1251.5,613.8 1259.5,611.8 1267.5,627.9 1276.5,625.8 1284.5,630.5 1292.5,624.4 1300.5,617.5 1308.5,618.2 1316.5,612.5 1324.5,572.8 1332.5,564.1 1341.5,574.2 1349.5,583.2 1357.5,595.3 1365.5,599.2 1373.5,585.4 1381.5,584.3 1389.5,601.7 1397.5,602.1 1406.5,609.7 1414.5,622.0 1422.5,625.9 1430.5,625.8 1438.5,628.1" fill="none" stroke="#2962ff" stroke-width="1.6"/>
<polyline points="16.5,617.4 24.5,618.4 32.5,619.2 40.5,622.3 48.5,623.1 56.5,626.6 65.5,616.9 73.5,616.4 81.5,610.5 89.5,610.0 97.5,605.9 105.5,602.9 113.5,605.4 121.5,603.9 130.5,603.5 138.5,601.2 146.5,599.0 154.5,594.1 162.5,588.9 170.5,577.6 178.5,571.3 187.5,567.4 195.5,570.9 203.5,569.5 211.5,570.9 219.5,571.6 227.5,575.5 235.5,574.4 243.5,571.8 252.5,569.2 260.5,566.7 268.5,569.3 276.5,570.9 284.5,578.8 292.5,585.5 300.5,581.9 308.5,576.1 317.5,564.5 325.5,566.4 333.5,565.9 341.5,567.2 349.5,568.2 357.5,568.9 365.5,572.2 373.5,575.8 382.5,577.0 390.5,577.7 398.5,576.4 406.5,575.4 414.5,573.4 422.5,581.3 430.5,589.2 438.5,597.3 447.5,594.7 455.5,585.6 463.5,577.4 471.5,575.5 479.5,586.1 487.5,597.2 495.5,603.1 503.5,602.1 512.5,603.2 520.5,604.6 528.5,615.8 536.5,620.0 544.5,620.3 552.5,612.6 560.5,599.7 568.5,584.5 577.5,573.3 585.5,578.6 593.5,593.1 601.5,605.6 609.5,610.1 617.5,611.2 625.5,611.8 633.5,613.5 642.5,614.8 650.5,620.7 658.5,624.6 666.5,628.5 674.5,619.5 682.5,611.4 690.5,603.8 699.5,599.8 707.5,596.9 715.5,593.3 723.5,589.7 731.5,584.2 739.5,583.2 747.5,577.6 755.5,574.2 764.5,571.3 772.5,574.7 780.5,576.6 788.5,580.6 796.5,577.1 804.5,574.5 812.5,565.6 820.5,566.3 829.5,568.5 837.5,569.4 845.5,568.2 853.5,564.0 861.5,561.0 869.5,559.5 877.5,562.4 885.5,563.9 894.5,564.1 902.5,563.3 910.5,564.0 918.5,568.3 926.5,570.5 934.5,572.0 942.5,569.9 950.5,565.9 959.5,566.0 967.5,567.1 975.5,572.7 983.5,582.9 991.5,601.5 999.5,621.0 1007.5,627.1 1015.5,614.2 1024.5,604.2 1032.5,595.7 1040.5,587.3 1048.5,574.8 1056.5,563.2 1064.5,563.4 1072.5,564.2 1080.5,564.9 1089.5,563.4 1097.5,564.0 1105.5,569.5 1113.5,575.4 1121.5,577.3 1129.5,580.9 1137.5,589.7 1145.5,593.9 1154.5,600.2 1162.5,586.6 1170.5,580.0 1178.5,569.1 1186.5,584.6 1194.5,591.6 1202.5,599.5 1211.5,595.4 1219.5,602.3 1227.5,606.2 1235.5,610.3 1243.5,611.8 1251.5,613.0 1259.5,613.6 1267.5,617.8 1276.5,621.8 1284.5,628.0 1292.5,626.9 1300.5,624.1 1308.5,620.0 1316.5,616.1 1324.5,601.2 1332.5,583.1 1341.5,570.4 1349.5,573.8 1357.5,584.2 1365.5,592.5 1373.5,593.3 1381.5,589.6 1389.5,590.5 1397.5,596.0 1406.5,604.5 1414.5,611.3 1422.5,619.2 1430.5,624.6 1438.5,626.6" fill="none" stroke="#ff6d00" stroke-width="1.6"/>
</g>
<text x="27" y="484" fill="#131722" stroke="#131722" stroke-width="0.5">RSI</text>
<text x="27" y="578" fill="#131722" stroke="#131722" stroke-width="0.5">Stoch</text>
<text x="1739" y="480.3" text-anchor="end" fill="#131722" stroke="#131722" stroke-width="0.5">80.00</text>
<path d="M1679.5,493.5H1741.7Q1744.7,493.5 1744.7,496.5V516.9Q1744.7,519.9 1741.7,519.9H1679.5Z" fill="#fdd835"/>
<text x="1739" y="513.1" text-anchor="end" fill="#000" stroke="#000" stroke-width="0.5">50.94</text>
<path d="M1679.5,519.9H1741.7Q1744.7,519.9 1744.7,522.9V541.7Q1744.7,544.7 1741.7,544.7H1679.5Z" fill="#7e57c2"/>
<text x="1739" y="538" text-anchor="end" fill="#fff" stroke="#fff" stroke-width="0.5">31.38</text>
<text x="1749" y="564.4" text-anchor="end" fill="#131722" stroke="#131722" stroke-width="0.5">100.00</text>
<path d="M1679.5,589.1H1741.7Q1744.7,589.1 1744.7,592.1V612.5Q1744.7,615.5 1741.7,615.5H1679.5Z" fill="#ff6d00"/>
<text x="1739" y="608.7" text-anchor="end" fill="#fff" stroke="#fff" stroke-width="0.5">11.30</text>
<path d="M1679.5,616.1H1733Q1736,616.1 1736,619.1V637Q1736,640 1733,640H1679.5Z" fill="#2962ff"/>
<text x="1730" y="634.4" text-anchor="end" fill="#fff" stroke="#fff" stroke-width="0.5">9.92</text>
<text x="243.5" y="669.3" text-anchor="middle" fill="#131722" stroke="#131722" stroke-width="0.5">May</text>
<text x="495.5" y="669.3" text-anchor="middle" fill="#131722" stroke="#131722" stroke-width="0.5">Jun</text>
<text x="739" y="669.3" text-anchor="middle" fill="#131722" stroke="#131722" stroke-width="0.5">Jul</text>
<text x="992" y="669.3" text-anchor="middle" fill="#131722" stroke="#131722" stroke-width="0.5">Aug</text>
<text x="1244" y="669.3" text-anchor="middle" fill="#131722" stroke="#131722" stroke-width="0.5">Sep</text>
<text x="1488" y="669.3" text-anchor="middle" fill="#131722" stroke="#131722" stroke-width="0.5">Oct</text>
<g fill="#131313">
<path d="M18,716.2H36.1V738.4H27.1V724.9H18Z"/>
<circle cx="43.6" cy="720.4" r="4.3"/>
<path d="M51.3,716.2H62.5L54.2,738.4H43.8Z"/>
<text x="73.5" y="738.4" font-weight="bold" font-size="31" textLength="181" lengthAdjust="spacingAndGlyphs">TradingView</text>
</g>
</svg></body></html>
